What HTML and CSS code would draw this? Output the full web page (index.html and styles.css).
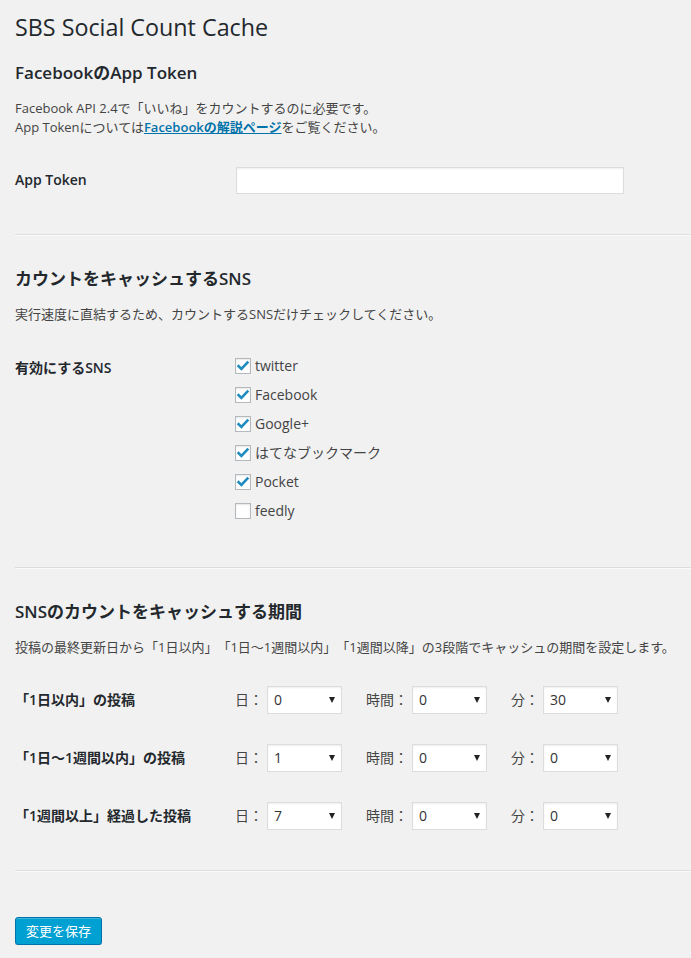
FILE: index.html
```html
<!DOCTYPE html>
<html lang="ja">
<head>
<meta charset="utf-8">
<title>SBS Social Count Cache</title>
<link rel="stylesheet" href="styles.css">
</head>
<body>
<div class="wrap">
  <h1 class="page-title">SBS Social Count Cache</h1>

  <section class="section section-first">
    <h2 class="section-title">FacebookのApp Token</h2>
    <p class="desc">Facebook API 2.4で「いいね」をカウントするのに必要です。<br>App Tokenについては<a class="link" href="#">Facebookの解説ページ</a>をご覧ください。</p>
    <div class="form-row row-token">
      <div class="row-label label-token">App Token</div>
      <div class="row-field"><input class="text-input" type="text"></div>
    </div>
  </section>
  <hr class="divider divider-1">

  <section class="section">
    <h2 class="section-title">カウントをキャッシュするSNS</h2>
    <p class="desc">実行速度に直結するため、カウントするSNSだけチェックしてください。</p>
    <div class="form-row row-sns">
      <div class="row-label label-sns">有効にするSNS</div>
      <div class="row-field check-list">
        <label class="check-item"><span class="checkbox checked"><svg viewBox="0 0 16 16" width="16" height="16"><path d="M3.6 8.2 L6.4 11 L12.4 4.6" fill="none" stroke="#1e8cbe" stroke-width="2.6" stroke-linecap="square" stroke-linejoin="miter"/></svg></span>twitter</label>
        <label class="check-item"><span class="checkbox checked"><svg viewBox="0 0 16 16" width="16" height="16"><path d="M3.6 8.2 L6.4 11 L12.4 4.6" fill="none" stroke="#1e8cbe" stroke-width="2.6" stroke-linecap="square" stroke-linejoin="miter"/></svg></span>Facebook</label>
        <label class="check-item"><span class="checkbox checked"><svg viewBox="0 0 16 16" width="16" height="16"><path d="M3.6 8.2 L6.4 11 L12.4 4.6" fill="none" stroke="#1e8cbe" stroke-width="2.6" stroke-linecap="square" stroke-linejoin="miter"/></svg></span>Google+</label>
        <label class="check-item"><span class="checkbox checked"><svg viewBox="0 0 16 16" width="16" height="16"><path d="M3.6 8.2 L6.4 11 L12.4 4.6" fill="none" stroke="#1e8cbe" stroke-width="2.6" stroke-linecap="square" stroke-linejoin="miter"/></svg></span>はてなブックマーク</label>
        <label class="check-item"><span class="checkbox checked"><svg viewBox="0 0 16 16" width="16" height="16"><path d="M3.6 8.2 L6.4 11 L12.4 4.6" fill="none" stroke="#1e8cbe" stroke-width="2.6" stroke-linecap="square" stroke-linejoin="miter"/></svg></span>Pocket</label>
        <label class="check-item"><span class="checkbox"></span>feedly</label>
      </div>
    </div>
  </section>
  <hr class="divider divider-2">

  <section class="section">
    <h2 class="section-title">SNSのカウントをキャッシュする期間</h2>
    <p class="desc">投稿の最終更新日から「1日以内」「1日～1週間以内」「1週間以降」の3段階でキャッシュの期間を設定します。</p>
    <div class="period-rows">
      <div class="form-row row-period">
        <div class="row-label label-period">「1日以内」の投稿</div>
        <div class="row-field period-fields">
          <span class="unit">日：</span><span class="select-wrap"><select class="select"><option>0</option></select></span>
          <span class="unit unit-gap">時間：</span><span class="select-wrap"><select class="select"><option>0</option></select></span>
          <span class="unit unit-gap">分：</span><span class="select-wrap"><select class="select"><option>30</option></select></span>
        </div>
      </div>
      <div class="form-row row-period">
        <div class="row-label label-period">「1日～1週間以内」の投稿</div>
        <div class="row-field period-fields">
          <span class="unit">日：</span><span class="select-wrap"><select class="select"><option>1</option></select></span>
          <span class="unit unit-gap">時間：</span><span class="select-wrap"><select class="select"><option>0</option></select></span>
          <span class="unit unit-gap">分：</span><span class="select-wrap"><select class="select"><option>0</option></select></span>
        </div>
      </div>
      <div class="form-row row-period">
        <div class="row-label label-period">「1週間以上」経過した投稿</div>
        <div class="row-field period-fields">
          <span class="unit">日：</span><span class="select-wrap"><select class="select"><option>7</option></select></span>
          <span class="unit unit-gap">時間：</span><span class="select-wrap"><select class="select"><option>0</option></select></span>
          <span class="unit unit-gap">分：</span><span class="select-wrap"><select class="select"><option>0</option></select></span>
        </div>
      </div>
    </div>
  </section>
  <hr class="divider divider-3">

  <div class="submit-area">
    <button class="button-primary" type="button">変更を保存</button>
  </div>
</div>
</body>
</html>
```

FILE: styles.css
```css
html, body {
  margin: 0;
  padding: 0;
  background: #f1f1f1;
}

body {
  font-family: "Open Sans", "Noto Sans CJK JP", sans-serif;
  color: #444;
  font-size: 13px;
  text-spacing-trim: space-all;
}

.wrap {
  padding: 12.5px 0 0 15px;
}

.page-title {
  margin: 0;
  font-size: 23.3px;
  font-weight: 400;
  line-height: 29px;
  color: #23282d;
}

.section-title {
  margin: 31.4px 0 0;
  font-size: 17px;
  font-weight: 600;
  line-height: 24px;
  color: #23282d;
}

.section-first .section-title {
  margin-top: 19px;
}

.desc {
  margin: 14px 0 0;
  font-size: 13px;
  line-height: 19px;
  color: #444;
}

.link {
  color: #0073aa;
  font-weight: 600;
  text-decoration: underline;
}

.form-row {
  display: grid;
  grid-template-columns: 220px auto;
  align-items: start;
}

.row-label {
  font-size: 14px;
  font-weight: 600;
  line-height: 18px;
  color: #23282d;
}

.row-token {
  margin-top: 30px;
}

.label-token {
  padding-top: 4px;
}

.text-input {
  display: block;
  box-sizing: border-box;
  margin: 0 0 0 1px;
  width: 388px;
  height: 27px;
  border: 1px solid #ddd;
  background: #fff;
  box-shadow: inset 0 1px 2px rgba(0, 0, 0, 0.07);
  font: 14px "Open Sans", sans-serif;
  padding: 3px 5px;
  outline: none;
}

.divider {
  border: 0;
  border-top: 1px solid #ddd;
  border-bottom: 1px solid #fafafa;
  height: 0;
  margin: 0;
}

.divider-1 { margin-top: 40.5px; }
.divider-2 { margin-top: 48px; }
.divider-3 { margin-top: 40px; }

.row-sns {
  margin-top: 33.6px;
}

.label-sns {
  padding-top: 1px;
}

.check-list {
  display: flex;
  flex-direction: column;
  gap: 13px;
}

.check-item {
  display: flex;
  align-items: center;
  height: 16px;
  font-size: 14px;
  line-height: 16px;
  color: #444;
}

.checkbox {
  box-sizing: border-box;
  width: 16px;
  height: 16px;
  margin-right: 4px;
  border: 1px solid #b4b9be;
  background: #fff;
  box-shadow: inset 0 1px 2px rgba(0, 0, 0, 0.1);
  position: relative;
  flex: none;
}

.checkbox svg {
  position: absolute;
  left: -1px;
  top: -1px;
}

.period-rows {
  margin-top: 28.6px;
  display: flex;
  flex-direction: column;
  gap: 30px;
}

.label-period {
  padding-top: 5.5px;
}

.period-fields {
  display: flex;
  align-items: center;
  height: 28px;
}

.unit {
  font-size: 14px;
  line-height: 28px;
  color: #444;
  margin-right: 4px;
}

.unit-gap {
  margin-left: 24px;
}

.select-wrap {
  position: relative;
  display: block;
  width: 75px;
  height: 28px;
}

.select-wrap::after {
  content: "";
  position: absolute;
  right: 7px;
  top: 11px;
  width: 0;
  height: 0;
  border-left: 3px solid transparent;
  border-right: 3px solid transparent;
  border-top: 6px solid #222;
  pointer-events: none;
}

.select {
  -webkit-appearance: none;
  appearance: none;
  box-sizing: border-box;
  display: block;
  width: 75px;
  height: 28px;
  margin: 0;
  padding: 0 6px;
  border: 1px solid #ddd;
  border-radius: 0;
  background: #fff;
  box-shadow: inset 0 1px 2px rgba(0, 0, 0, 0.07);
  font: 14px "Open Sans", sans-serif;
  color: #333;
  outline: none;
}

.submit-area {
  margin-top: 45px;
}

.button-primary {
  box-sizing: border-box;
  height: 28px;
  margin: 0;
  padding: 0 10px 1px;
  border: 1px solid #0073aa;
  border-radius: 3px;
  background: #00a0d2;
  box-shadow: inset 0 1px 0 rgba(120, 200, 230, 0.5), 0 1px 0 rgba(0, 0, 0, 0.15);
  color: #fff;
  font: 13px/26px "Open Sans", "Noto Sans CJK JP", sans-serif;
  cursor: pointer;
}
```
